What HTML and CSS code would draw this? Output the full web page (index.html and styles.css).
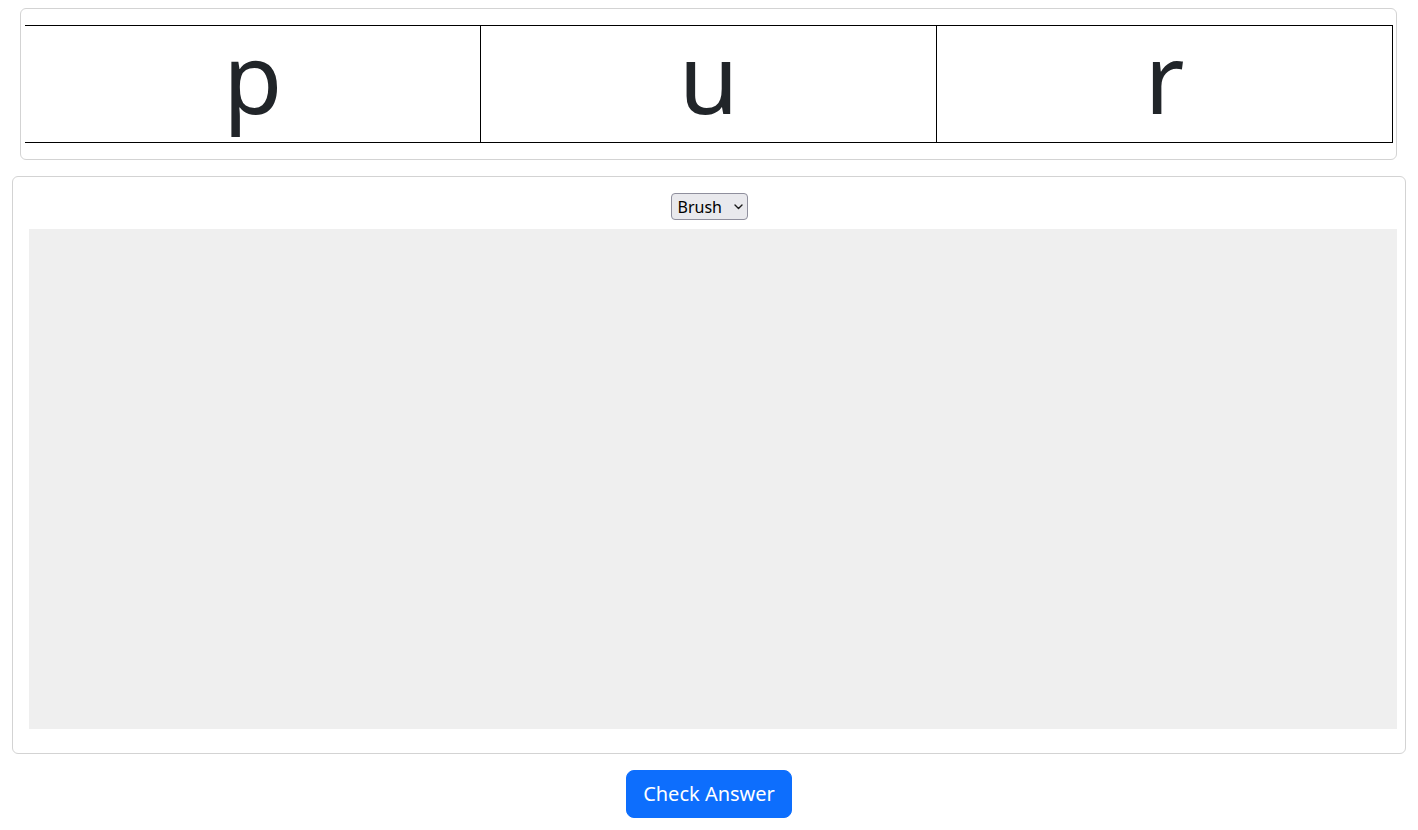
FILE: index.html
```html
<!DOCTYPE html>
<html lang="en">
<head>
<meta charset="utf-8">
<title>Tracing</title>
<link rel="stylesheet" href="styles.css">
</head>
<body>
<div class="letters-card">
  <table class="letters">
    <tr>
      <td>p</td>
      <td>u</td>
      <td>r</td>
    </tr>
  </table>
</div>
<div class="draw-card">
  <div class="tool-row">
    <span class="select-wrap">
      <select class="tool-select">
        <option>Brush</option>
        <option>Eraser</option>
      </select>
      <svg class="chevron" width="9" height="6" viewBox="0 0 9 6" aria-hidden="true"><path d="M1 1 L4.5 4.5 L8 1" fill="none" stroke="#1a1a1a" stroke-width="1.4" stroke-linecap="round" stroke-linejoin="round"/></svg>
    </span>
  </div>
  <div class="canvas"></div>
</div>
<div class="actions">
  <button class="btn-check">Check Answer</button>
</div>
</body>
</html>
```
FILE: styles.css
```css
html, body {
  margin: 0;
  padding: 0;
  background: #fff;
  font-family: "Noto Sans", "Open Sans", sans-serif;
  color: #212529;
}

.letters-card {
  margin: 8px 21px 16px 20px;
  border: 1px solid #d3d3d3;
  border-radius: 6px;
  padding: 16px 4px;
}

.letters {
  width: 1368px;
  border-collapse: collapse;
  table-layout: fixed;
}

.letters td {
  border-top: 1px solid #000;
  border-bottom: 1px solid #000;
  border-right: 1px solid #000;
  text-align: center;
  font-size: 96px;
  line-height: 96px;
  height: 117px;
  padding: 0 0 14px 0;
  box-sizing: border-box;
  vertical-align: middle;
  color: #212529;
}

.draw-card {
  margin: 0 12px;
  border: 1px solid #d3d3d3;
  border-radius: 6px;
  padding: 16px 16px 24px 16px;
}

.tool-row {
  display: flex;
  justify-content: center;
  margin-bottom: 8px;
  height: 28px;
}

.select-wrap {
  position: relative;
  display: inline-block;
  height: 28px;
}

.tool-select {
  appearance: none;
  -webkit-appearance: none;
  font-family: "Noto Sans", "Open Sans", sans-serif;
  font-size: 16px;
  color: #000;
  width: 77px;
  height: 27px;
  padding: 0 0 0 6px;
  margin: 0;
  background: #e9e9ed;
  border: 1px solid #8f8f9d;
  border-radius: 4px;
}

.chevron {
  position: absolute;
  left: 63px;
  top: 11px;
  pointer-events: none;
}

.canvas {
  width: 1368px;
  height: 500px;
  background: #efefef;
}

.actions {
  text-align: center;
  margin-top: 16px;
}

.btn-check {
  font-family: "Noto Sans", "Open Sans", sans-serif;
  font-size: 20px;
  line-height: 30px;
  padding: 8px 16px;
  color: #fff;
  background: #0d6efd;
  border: 1px solid #0d6efd;
  border-radius: 8px;
  cursor: pointer;
}
```
